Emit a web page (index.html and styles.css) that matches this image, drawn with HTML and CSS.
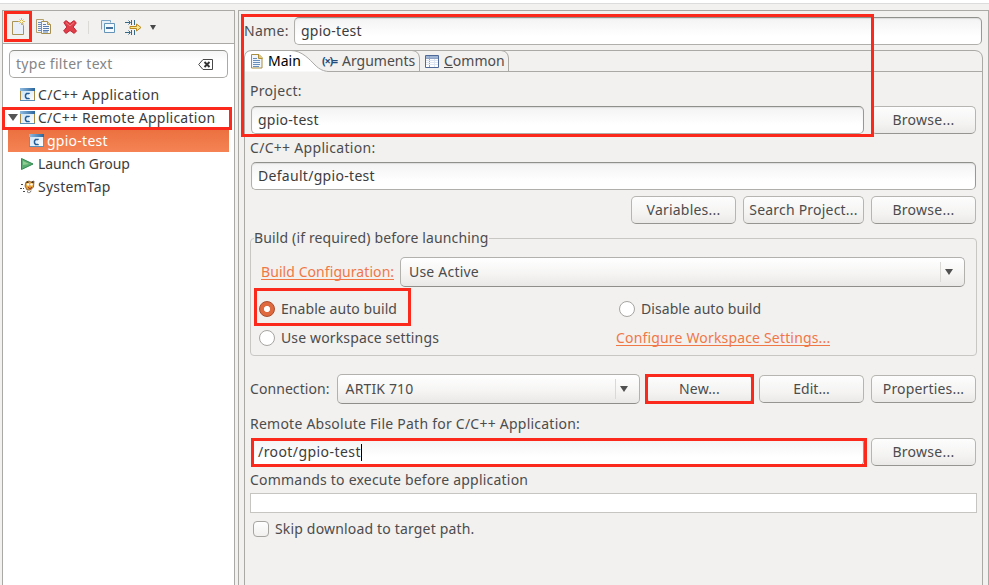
FILE: index.html
```
<!DOCTYPE html>
<html lang="en">
<head>
<meta charset="utf-8">
<title>Run Configurations</title>
<link rel="stylesheet" href="styles.css">
</head>
<body>
<svg class="defs" width="0" height="0">
  <defs>
    <linearGradient id="blueBar" x1="0" x2="1"><stop offset="0" stop-color="#8fbbe0"/><stop offset="1" stop-color="#28659c"/></linearGradient>
    <linearGradient id="paneFill" x1="0" y1="0" x2="1" y2="1"><stop offset="0" stop-color="#c5e1f5"/><stop offset="1" stop-color="#fff"/></linearGradient>
    <symbol id="capp" viewBox="0 0 16 16">
      <rect x=".5" y="1.500" width="14" height="12" fill="url(#paneFill)" stroke="#a58b45"/>
      <path d="M0 13.500h15" stroke="#5c8fb8"/>
      <rect x="0" y="1" width="15" height="3" fill="url(#blueBar)"/>
      <path d="M9 7V6.500H6.500L5.500 8v2l1 1.500H9V11" fill="none" stroke="#245d96" stroke-width="1.500"/>
    </symbol>
  </defs>
</svg>
<div class="window">
  <div class="edge"></div>
  <main>
    <aside>
      <div class="toolbar">
        <svg class="t-new" width="18" height="18" viewBox="0 0 18 18"><path d="M2.500 3.500h8l3 4v9h-11z" fill="#e9f0fa" stroke="#a89458"/><path d="M11.500 0v7M8 3.500h7M9.500 1.500l4 4M13.500 1.500l-4 4" stroke="#d4b65b"/><path d="M11.500 2v3M10 3.500h3" stroke="#fff5c4"/></svg>
        <svg class="t-copy" width="16" height="16" viewBox="0 0 16 16"><path d="M.5.5h7v13h-7z" fill="#eef4fb" stroke="#b3a06b"/><path d="M2 3.500h3M2 5.500h3M2 7.500h3M2 9.500h3M2 11.500h3" stroke="#6f8fbd"/><path d="M5.500 2.500h6l3 3v9h-9z" fill="#f5f8fd" stroke="#a58f50"/><path d="M11.500 2.500v3h3" fill="#ecd795" stroke="#b29648"/><path d="M7 5.500h3M7 7.500h6M7 9.500h6M7 11.500h6M7 13h5" stroke="#587eb1"/></svg>
        <svg class="t-del" width="14" height="14" viewBox="0 0 14 14"><path d="M.8 2.500 3 .6 7 3.500 11 .6 13.300 2.800 10.200 7l3.300 4-2.300 2.400L7 10.500 3 13.400.6 11 3.800 7z" fill="#de3f48" stroke="#c72536"/><path d="M3 2.500 7 6l4-3.500" stroke="#f07b7c" fill="none"/></svg>
        <i class="t-sep"></i>
        <svg class="t-col" width="14" height="14" viewBox="0 0 14 14"><path d="M.5 9.500v-9h9v2" fill="#e4eff8" stroke="#79a4c5"/><path d="M3.500 3.500h10v9h-10z" fill="#f4faff" stroke="#6594b9"/><path d="M5 8h7" stroke="#174f86" stroke-width="1.600"/></svg>
        <svg class="t-filter" width="17" height="15" viewBox="0 0 17 15"><path d="M0 2.500h5M0 12.500h5M6.500 0v5M6.500 10v5M9.500 0v5M9.500 10v5" stroke="#376a89"/><path d="M3.500.5 5.500 2.500l-2 2M3.500 10.500l2 2-2 2" stroke="#376a89" fill="none"/><path d="M5 6.500h6.500V4l4.500 3.500-4.500 3.500V8.500H5z" fill="#fbe78c" stroke="#b78920"/></svg>
        <i class="t-arrow"></i>
      </div>
      <div class="search"><span class="s1">type filter text</span>
        <svg width="15" height="11" viewBox="0 0 15 11"><path d="M5 .5h9.500v10H5L.7 5.500z" fill="#fff" stroke="#484848"/><path d="m6.500 3 5 5m0-5-5 5" stroke="#333" stroke-width="1.900"/></svg>
      </div>
      <div class="tree">
        <div class="node"><svg width="16" height="16"><use href="#capp"/></svg><span class="s2">C/C++ Application</span></div>
        <div class="node open"><i class="twisty"></i><svg width="16" height="16"><use href="#capp"/></svg><span class="s3">C/C++ Remote Application</span></div>
        <div class="node child"><svg width="16" height="16"><use href="#capp"/></svg><span class="s4">gpio-test</span></div>
        <div class="node"><svg width="16" height="16" viewBox="0 0 16 16"><path d="M1.500 2.500 13 8 1.500 13.500z" fill="#5bad72" stroke="#328950"/><path d="M3 5l6 3-6 1" fill="#94cd91"/></svg><span class="s5">Launch Group</span></div>
        <div class="node"><svg width="16" height="16" viewBox="0 0 16 16"><path d="M6 3l3-1 2 1 3-1-.5 6-3 3H7L5 7z" fill="#e8a43b" stroke="#63431c" stroke-width=".7"/><path d="M6 4l1.500-2L9 4M11 4l1.500-2L14 4" fill="#4b3422"/><circle cx="8" cy="5.500" r="1.200" fill="#fff"/><circle cx="11.500" cy="5.500" r="1.200" fill="#fff"/><path d="M8 8.500q2 2 4 0" stroke="#98261d" fill="none"/><path d="M1 5.500h3M0 9.500h4M3 12.500h3M7 12.500l2 1.500 3-2.500" stroke="#4c4b48" stroke-dasharray="2 1" fill="none"/></svg><span class="s6">SystemTap</span></div>
      </div>
      <div class="mark mark-new"></div>
      <div class="mark mark-remote"></div>
    </aside>
    <section class="details">
      <div class="name-row"><label class="s7">Name:</label><div class="field"><span class="s4">gpio-test</span></div></div>
      <div class="folder">
        <div class="tabs">
          <svg class="tab-lines" width="739" height="22" viewBox="0 0 739 22"><path d="M0 21V7Q1 .5 8 .5H47C58 .5 66 10 71 15S80 21 84 21.500H0z" fill="#fff"/><path d="M.5 22V7Q1 .5 8 .5H47C58 .5 66 10 71 15S80 21 84 21.500H738.500M47 .5H731Q738 1 738.500 8V22M168 .5Q175 1 175.500 8V21M257 .5Q264 1 264.500 8V21" fill="none" stroke="#aaa9a5"/></svg>
          <div class="tab main-tab"><svg width="12" height="15" viewBox="0 0 12 15"><path d="M.5.5H8l3 3v10.500H.5z" fill="#f1f6fd" stroke="#a98f43"/><path d="M7.500.5v4h4" fill="#e6ca74" stroke="#ae8d35"/><path d="M2 4.500h4M2 6.500h7M2 8.500h7M2 10.500h7M2 12.500h6" stroke="#6a8fbd"/></svg><span class="s8">Main</span></div>
          <div class="tab args-tab"><b class="vars">(×)=</b><span class="s9">Arguments</span></div>
          <div class="tab common-tab"><svg width="14" height="13" viewBox="0 0 14 13"><path d="M.5.500h13v12H.5z" fill="#fff" stroke="#4f6a98"/><path d="M1 1h12v2.500H1z" fill="#9eb4d5"/><path d="M1 3.500h12M4.500 1v11" stroke="#8fa3c4"/><path d="M1 5.500h12M1 7.500h12M1 9.500h12M9.500 4v8" stroke="#dce5f1"/></svg><span class="s10"><u>C</u>ommon</span></div>
        </div>
        <div class="page">
          <label class="line project"><span class="s11">Project:</span></label>
          <div class="row project-row"><div class="field"><span class="s4">gpio-test</span></div><div class="button w105"><span class="s12">Browse...</span></div></div>
          <label class="line app"><span class="s13">C/C++ Application:</span></label>
          <div class="row app-row"><div class="field"><span class="s14">Default/gpio-test</span></div></div>
          <div class="row buttons"><div class="button w105"><span class="s15">Variables...</span></div><div class="button w121"><span class="s16">Search Project...</span></div><div class="button w105"><span class="s12">Browse...</span></div></div>
          <div class="group">
            <div class="legend"><span class="s17">Build (if required) before launching</span></div>
            <div class="config"><a class="s18">Build Configuration:</a><div class="combo"><span class="s19">Use Active</span><i></i></div></div>
            <div class="options">
              <div class="option"><i class="radio on"></i><span class="s20">Enable auto build</span></div>
              <div class="option"><i class="radio"></i><span class="s21">Disable auto build</span></div>
              <div class="option"><i class="radio"></i><span class="s22">Use workspace settings</span></div>
              <div class="option link"><a class="s23">Configure Workspace Settings...</a></div>
            </div>
          </div>
          <div class="connection"><label class="s24">Connection:</label><div class="combo"><span class="s25">ARTIK 710</span><i></i></div><div class="button w105"><span class="s26">New...</span></div><div class="button w105"><span class="s27">Edit...</span></div><div class="button w105"><span class="s28">Properties...</span></div></div>
          <label class="line remote"><span class="s29">Remote Absolute File Path for C/C++ Application:</span></label>
          <div class="row remote-row"><div class="field focus"><span class="s30">/root/gpio-test</span><i class="caret"></i></div><div class="button w105"><span class="s12">Browse...</span></div></div>
          <label class="line commands"><span class="s31">Commands to execute before application</span></label>
          <div class="plain"></div>
          <div class="skip"><i class="check"></i><span class="s32">Skip download to target path.</span></div>
        </div>
      </div>
      <div class="mark mark-project"></div>
      <div class="mark mark-auto"></div>
      <div class="mark mark-connection"></div>
      <div class="mark mark-path"></div>
    </section>
  </main>
</div>
</body>
</html>
```
FILE: styles.css
```
* { box-sizing: border-box; }
body { margin: 0; background: #f2f1f0; color: #4c4c4c; font: 14px/18px "Noto Sans", sans-serif; overflow: hidden; }
svg { display: block; flex: none; overflow: visible; }
.defs { position: absolute; }
span, label, a { white-space: nowrap; }
i { flex: none; }
.window { height: 585px; display: flex; flex-direction: column; }
.edge { height: 4px; background: #fff; border-bottom: 1px solid #dcdcdc; }
main { display: flex; flex: 1; padding: 6px 0 0 2px; }
aside { position: relative; width: 233px; border: 1px solid #aaa9a5; border-bottom: 0; background: #fff; }
.toolbar { height: 33px; background: #f2f1f0; border-bottom: 1px solid #aaa9a5; display: flex; align-items: center; padding-left: 7px; }
.t-copy { margin-left: 8px; }
.t-del { margin-left: 11px; }
.t-sep { width: 1px; height: 13px; background: #dcdad7; margin-left: 11px; }
.t-col { margin-left: 12px; }
.t-filter { margin-left: 10px; }
.t-arrow { margin-left: 8px; border: 3px solid transparent; border-top: 5px solid #484848; border-bottom: 0; }
.search { margin: 6px 6px 0; height: 28px; border: 1px solid #aaa9a5; border-top-color: #8f8f8c; border-radius: 5px; display: flex; align-items: center; justify-content: space-between; padding: 0 14px 0 6px; color: #858585; background: linear-gradient(#f5f5f5, #fff 40%); }
.tree { margin: 5px 5px 0; color: #3c3c3c; }
.node { height: 23px; display: flex; align-items: center; padding-left: 12px; gap: 2px; }
.open { padding-left: 0; gap: 2px; }
.twisty { border: 5px solid transparent; border-top: 7px solid #555; border-bottom: 0; }
.child { padding-left: 21px; background: linear-gradient(#eb703f, #f58354); color: #fff; }
.details { position: relative; width: 751px; margin-left: 3px; border: 1px solid #aaa9a5; border-bottom: 0; padding: 6px 5px 0 5px; display: flex; flex-direction: column; }
.name-row { display: flex; align-items: center; height: 28px; padding-right: 1px; }
.name-row .field { margin-left: auto; width: 688px; flex: none; }
.field { flex: 1; height: 28px; border: 1px solid #b0afab; border-top-color: #8f8f8c; border-right-color: #999895; border-radius: 5px; background: linear-gradient(#f3f3f3, #fff 70%); box-shadow: inset 0 1px 1px #ddd; display: flex; align-items: center; padding-left: 6px; color: #3c3c3c; }
.folder { flex: 1; margin-top: 5px; }
.tabs { position: relative; height: 22px; display: flex; }
.tab-lines { position: absolute; left: 0; top: 0; }
.tab { position: relative; height: 22px; display: flex; align-items: center; }
.main-tab { width: 78px; padding-left: 7px; gap: 5px; color: #000; }
.args-tab { width: 103px; gap: 4px; }
.common-tab { gap: 5px; }
.vars { color: #234b7b; font-size: 11px; letter-spacing: -1.300px; width: 16px; }
.page { border: solid #aaa9a5; border-width: 0 1px; height: 513px; padding: 10px 5px 0; display: flex; flex-direction: column; }
.line { height: 18px; flex: none; }
.row { display: flex; gap: 7px; padding: 0 1px; flex: none; }
.project-row { margin-top: 6px; }
.app { margin-top: 5px; }
.app-row { margin-top: 5px; }
.buttons { justify-content: flex-end; margin-top: 6px; }
.button { height: 28px; flex: none; border: 1px solid #b7b5b1; border-bottom-color: #969592; border-radius: 5px; background: linear-gradient(#fdfdfd, #f4f3f2 65%, #eae9e7); display: flex; align-items: center; justify-content: center; }
.w105 { width: 105px; }
.w121 { width: 121px; }
.group { height: 118px; margin-top: 14px; border: 1px solid #c9c7c4; border-radius: 4px; flex: none; }
.legend { width: max-content; height: 18px; margin: -10px 0 0 3px; background: #f2f1f0; }
.config { display: flex; align-items: center; margin-top: 10px; padding: 0 11px 0 10px; }
.config .combo { width: 565px; margin-left: auto; }
a { color: #f07746; border-bottom: 1px solid #f07746; height: 17px; line-height: 18px; }
.config a { margin-top: -2px; }
.combo { height: 30px; border: 1px solid #b2b1ae; border-bottom-color: #8f8e8b; border-radius: 5px; background: linear-gradient(#fff, #f6f5f4 55%, #e9e8e6); display: flex; align-items: center; justify-content: space-between; padding-left: 8px; }
.combo i { width: 24px; height: 20px; border-left: 1px solid #dad9d6; display: flex; align-items: center; padding-left: 4px; }
.combo i::after { content: ""; border: 4px solid transparent; border-top: 6px solid #505050; border-bottom: 0; }
.options { display: grid; grid-template-columns: 360px 1fr; grid-template-rows: 29px 29px; padding: 7px 0 0 8px; }
.option { display: flex; align-items: center; gap: 6px; }
.link { margin-left: -3px; }
.radio { width: 16px; height: 16px; border: 1px solid #a7a5a2; border-radius: 50%; background: #fff; }
.on { background: radial-gradient(circle, #fff 0 2.700px, #df6a40 3.500px); border-color: #a94c2b; }
.connection { display: flex; align-items: center; height: 30px; margin-top: 18px; padding-right: 1px; gap: 7px; flex: none; }
.connection .combo { width: 304px; margin-left: auto; }
.remote { margin-top: 11px; }
.remote-row { margin-top: 5px; }
.caret { width: 1px; height: 17px; background: #000; }
.commands { margin-top: 5px; }
.plain { height: 20px; margin-top: 4px; background: #fff; border: 1px solid #c7c5c2; flex: none; }
.skip { display: flex; align-items: center; gap: 6px; height: 18px; margin: 7px 0 0 3px; flex: none; }
.check { width: 16px; height: 16px; border: 1px solid #a7a5a2; border-radius: 4px; background: linear-gradient(#fff, #f1f0ef); }

.s1, .s2, .s13, .s14 { letter-spacing: .3px; }
.s3, .s4, .s12 { letter-spacing: .26px; }
.s5 { letter-spacing: -.1px; }
.s6, .s15, .s16, .s19, .s31 { letter-spacing: .21px; }
.s7, .s11 { letter-spacing: .3px; }
.s17, .s22, .s25, .s26 { letter-spacing: .14px; }
.s18, .s20, .s21, .s24 { letter-spacing: .07px; }
.s23, .s28, .s32 { letter-spacing: .17px; }
.s29 { letter-spacing: .235px; }
.s30 { letter-spacing: .43px; }

.mark { position: absolute; border: 3px solid #fa291b; pointer-events: none; }
.mark-new { left: 1px; top: 0; width: 28px; height: 31px; }
.mark-remote { left: -1px; top: 96px; width: 230px; height: 23px; }
.mark-project { left: 2px; top: 3px; width: 633px; height: 123px; }
.mark-auto { left: 15px; top: 277px; width: 157px; height: 38px; }
.mark-connection { left: 406px; top: 363px; width: 109px; height: 30px; }
.mark-path { left: 12px; top: 427px; width: 616px; height: 29px; }
```
